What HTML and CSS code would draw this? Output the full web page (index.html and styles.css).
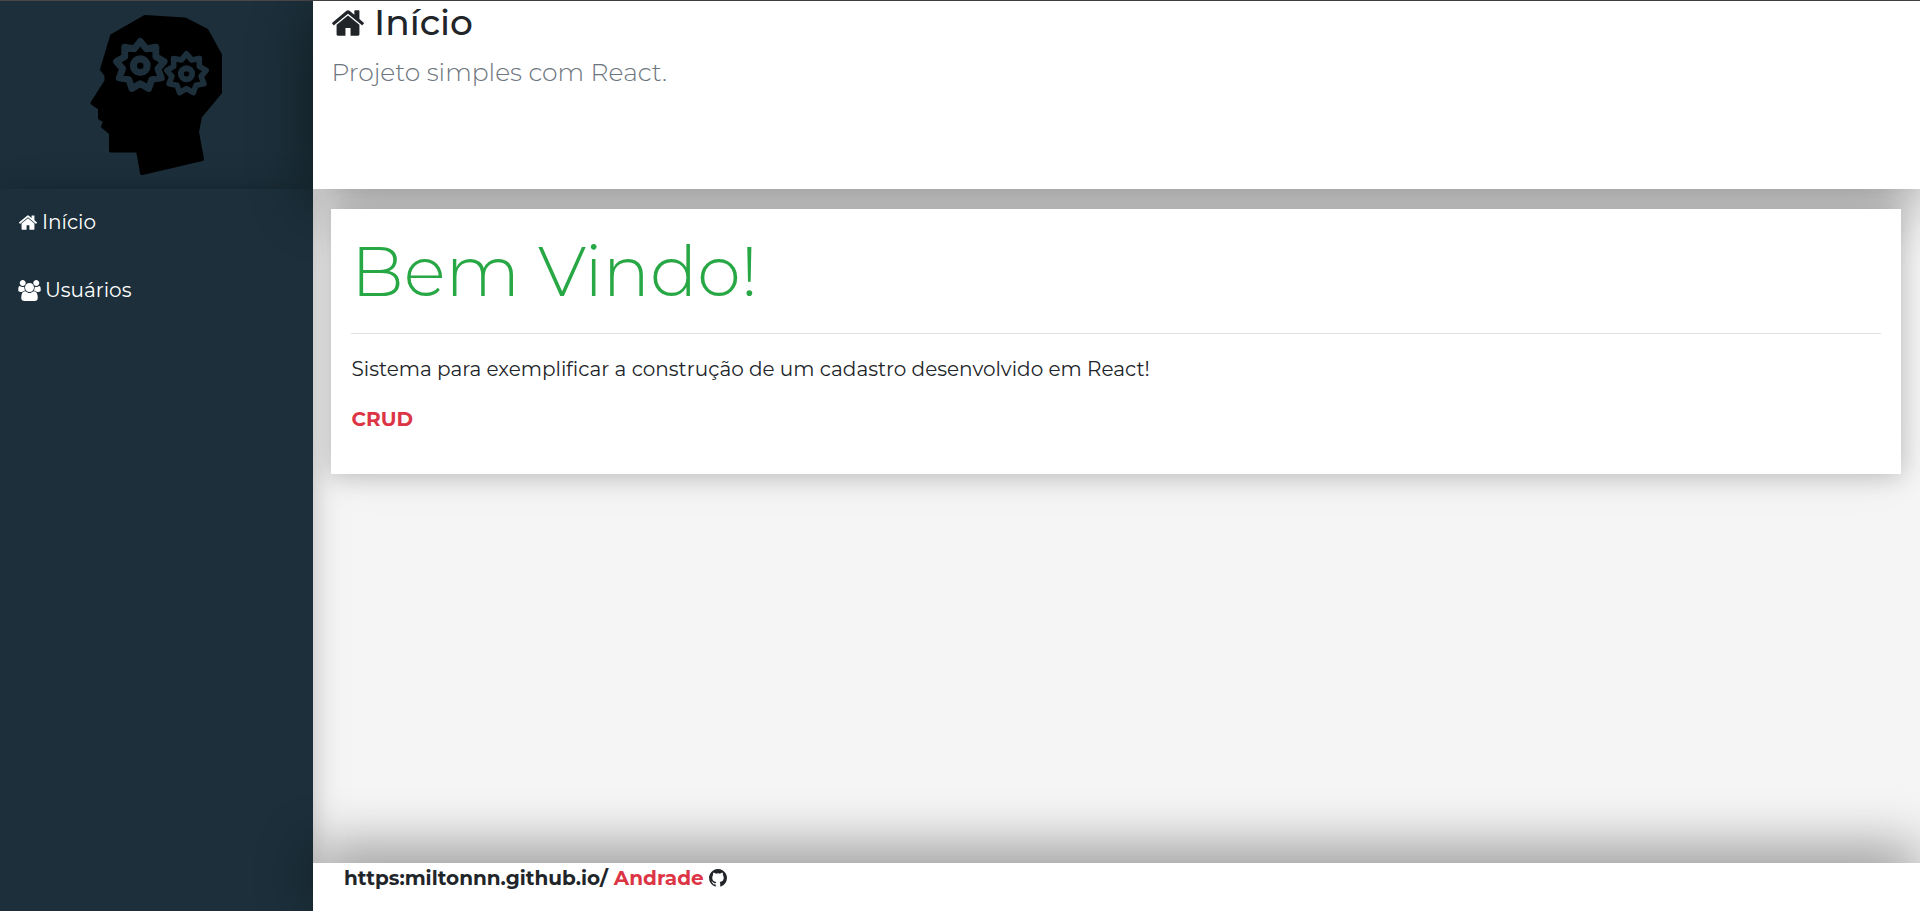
FILE: index.html
```html
<!DOCTYPE html>
<html lang="pt-BR">
<head>
<meta charset="utf-8">
<title>Início</title>
<link rel="stylesheet" href="styles.css">
</head>
<body>
<div class="app">
  <aside class="logo">
    <svg class="head" viewBox="89 13 134 163" aria-hidden="true">
      <defs>
        <g id="gear">
          <path d="M0-25 6.3-17.4 16.1-19.2 16-9.3 24.6-4.3 18.2 3.2 21.7 12.5 11.9 14.2 8.6 23.5 0 18.5-8.6 23.5-11.9 14.2-21.7 12.5-18.2 3.2-24.6-4.3-16-9.3-16.1-19.2-6.3-17.4Z" stroke-width="7"/>
          <circle r="7" stroke-width="7.4"/>
        </g>
      </defs>
      <path class="skull" d="M145 17 185 19.500 206.500 30.500 220 55V92.500L200 116.500 197 132 202 159 142 173 138 150.500H111V133L103 126.500 105.500 121 100 118V108L92.500 103 106.500 81V75L102 69.500 112 36Z"/>
      <use class="gear" href="#gear" transform="translate(140.300 65.700) scale(.97)"/>
      <use class="gear" href="#gear" transform="translate(186.500 73.800) scale(.8)"/>
    </svg>
  </aside>
  <header class="header">
    <h1 class="title">
      <svg class="icon-home" viewBox="89 253 1614 1283"><path id="home" d="M1472 992v480q0 26-19 45t-45 19h-384v-384h-256v384h-384q-26 0-45-19t-19-45v-480q0-1 .5-3t.5-3l575-474 575 474q1 2 1 6zm223-69l-62 74q-8 9-21 11h-3q-13 0-21-7l-692-577-692 577q-12 8-24 7-13-2-21-11l-62-74q-8-10-7-23.500t11-21.500l719-599q32-26 76-26t76 26l244 204v-195q0-14 9-23t23-9h192q14 0 23 9t9 23v408l219 182q10 8 11 21.500t-7 23.500z"/></svg>
      <span>Início</span>
    </h1>
    <p class="lead">Projeto simples com React.</p>
  </header>
  <aside class="menu">
    <nav>
      <a class="item item-home"><svg class="icon-home" viewBox="89 253 1614 1283"><use href="#home"/></svg><span>Início</span></a>
      <a class="item item-users"><svg class="icon-users" viewBox="-64 0 1920 1792"><path d="M529 896q-162 5-265 128h-134q-82 0-138-40.500t-56-118.500q0-353 124-353 6 0 43.500 21t97.500 42.500 119 21.500q67 0 133-23-5 37-5 66 0 139 81 256zm1071 637q0 120-73 189.500t-194 69.500h-874q-121 0-194-69.500t-73-189.500q0-53 3.500-103.500t14-109 26.500-108.500 43-97.500 62-81 85.500-53.500 111.500-20q10 0 43 21.500t73 48 107 48 135 21.500 135-21.500 107-48 73-48 43-21.500q61 0 111.500 20t85.500 53.500 62 81 43 97.500 26.500 108.500 14 109 3.500 103.500zm-1024-1277q0 106-75 181t-181 75-181-75-75-181 75-181 181-75 181 75 75 181zm704 384q0 159-112.500 271.500t-271.500 112.500-271.500-112.500-112.500-271.500 112.500-271.500 271.500-112.500 271.500 112.500 112.500 271.500zm576 225q0 78-56 118.500t-138 40.500h-134q-103-123-265-128 81-117 81-256 0-29-5-66 66 23 133 23 59 0 119-21.500t97.500-42.500 43.500-21q124 0 124 353zm-128-609q0 106-75 181t-181 75-181-75-75-181 75-181 181-75 181 75 75 181z"/></svg><span>Usuários</span></a>
    </nav>
  </aside>
  <main class="content">
    <section class="card">
      <div class="display">Bem Vindo!</div>
      <hr class="rule">
      <p class="text">Sistema para exemplificar a construção de um cadastro desenvolvido em React!</p>
      <p class="crud">CRUD</p>
    </section>
  </main>
  <footer class="footer">
    <span class="url">https:miltonnn.github.io/</span>
    <span class="author">Andrade</span>
    <svg class="icon-github" viewBox="128 128 1536 1500"><path d="M896 128q209 0 385.500 103t279.500 279.500 103 385.500q0 251-146.500 451.500t-378.500 277.500q-27 5-40-7t-13-30q0-3 .5-76.500t.5-134.500q0-97-52-142 57-6 102.500-18t94-39 81-66.500 53-105 20.500-150.500q0-119-79-206 37-91-8-204-28-9-81 11t-92 44l-38 24q-93-26-192-26t-192 26q-16-11-42.500-27t-83.500-38.500-85-13.500q-45 113-8 204-79 87-79 206 0 85 20.500 150t52.500 105 80.500 67 94 39 102.500 18q-39 36-49 103-21 10-45 15t-57 5-65.500-21.500-55.500-62.500q-19-32-48.500-52t-49.500-24l-20-3q-21 0-29 4.500t-5 11.500 9 14 13 12l7 5q22 10 43.500 38t31.500 51l10 23q13 38 44 61.500t67 30 69.500 7 55.500-3.500l23-4q0 38 .5 88.500t.5 54.500q0 18-13 30t-40 7q-232-77-378.500-277.500t-146.500-451.500q0-209 103-385.500t279.500-279.500 385.500-103z"/></svg>
  </footer>
</div>
</body>
</html>
```
FILE: styles.css
```css
* { box-sizing: border-box; }
body {
  margin: 0;
  font-family: Montserrat, Inter, "Open Sans", sans-serif;
  font-size: 20px;
  color: #212529;
  overflow: hidden;
}
h1, p { margin: 0; }
svg { display: block; flex: none; fill: currentColor; }
.app {
  display: grid;
  grid-template-columns: 313px 1fr;
  grid-template-rows: 188px 1fr 48px;
  height: 911px;
  border-top: 1px solid #484848;
}
.logo {
  display: flex;
  justify-content: center;
  padding: 12px 2px 0 0;
  background: #1c2f3a;
}
.head { width: 134px; height: 163px; }
.skull { fill: #000; stroke: #000; stroke-width: 4; stroke-linejoin: round; }
.gear { fill: none; stroke: #1c2f3a; stroke-linejoin: round; }
.header {
  z-index: 3;
  padding: 0 18px;
  background: #fff;
  box-shadow: 0 12px 56px rgba(0, 0, 0, .45);
}
.title {
  display: flex;
  align-items: center;
  gap: 10px;
  height: 43px;
  padding-left: 1px;
  font-size: 36px;
  font-weight: 500;
  line-height: 43px;
}
.title .icon-home { width: 32px; height: 26px; }
.lead {
  margin-top: 9px;
  padding-left: .5px;
  font-size: 25px;
  font-weight: 300;
  line-height: 38px;
  color: #6c757d;
}
.menu {
  grid-row: 2 / 4;
  z-index: 2;
  background: #1c2f3a;
  box-shadow: 0 2px 23px rgba(0, 0, 0, .2), 0 2px 49px rgba(0, 0, 0, .06);
}
.menu nav { margin-top: -1px; }
.item {
  display: flex;
  align-items: center;
  height: 68px;
  padding-left: 19px;
  color: #fff;
}
.item-home { gap: 5px; }
.item-home .icon-home { width: 18px; height: 15px; }
.item-users { gap: 4px; padding-left: 18px; }
.icon-users { width: 23px; height: 21px; }
.content {
  padding: 20px 19px 0 18px;
  background: #f5f5f5;
}
.card {
  position: relative;
  z-index: 4;
  height: 265px;
  padding: 20px;
  background: #fff;
  box-shadow: 0 2px 23px rgba(0, 0, 0, .22), 0 2px 49px rgba(0, 0, 0, .06);
  clip-path: inset(-20px -19px -60px -18px);
}
.display {
  font-size: 70px;
  font-weight: 300;
  line-height: 84px;
  color: #28a745;
}
.rule { margin: 20px 0; border: 0; border-top: 1px solid #e2e2e2; }
.text { padding-left: .5px; line-height: 30px; }
.crud {
  margin-top: 20px;
  padding-left: .5px;
  font-weight: 700;
  line-height: 30px;
  color: #dc3545;
}
.footer {
  z-index: 3;
  grid-column: 2;
  display: flex;
  align-items: flex-start;
  padding-left: 31px;
  font-weight: 700;
  line-height: 30px;
  background: #fff;
  box-shadow: 0 -12px 56px rgba(0, 0, 0, .45);
}
.author { margin-left: 6px; color: #dc3545; }
.icon-github { width: 18px; height: 17.500px; margin: 6px 0 0 5.500px; }
```
